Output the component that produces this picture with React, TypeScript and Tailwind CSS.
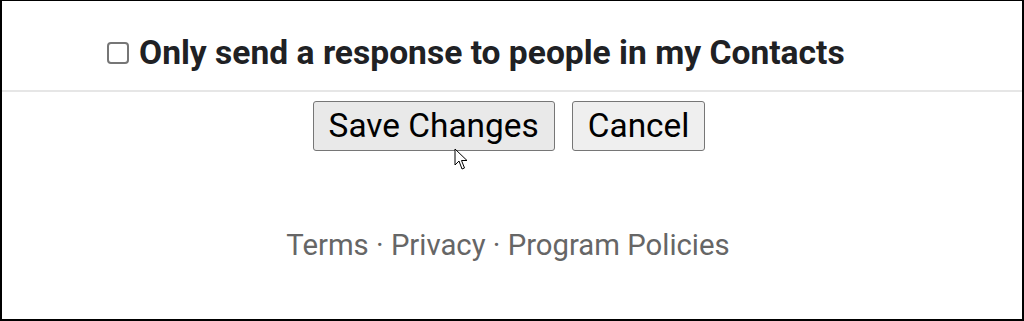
export default function App() {
  return (
    <div
      className="relative w-[1024px] h-[321px] bg-white border-t border-l-2 border-r-2 border-b-2 border-black overflow-hidden"
      style={{ fontFamily: 'Roboto, "Liberation Sans", sans-serif' }}
    >
      <div className="h-[89px] flex items-center pt-[14px] pl-[105px]">
        <label className="flex items-center gap-[10px]">
          <span className="w-[22px] h-[22px] border-2 border-[#767676] rounded-[4px] bg-white box-border" />
          <span className="text-[33.6px] font-bold text-[#202124] leading-none">
            Only send a response to people in my Contacts
          </span>
        </label>
      </div>
      <div className="h-[2px] bg-[#e6e6e6]" />
      <div className="flex justify-center gap-[17px] mt-[9px] pr-[6px]">
        <button className="h-[50px] px-[15px] bg-[#e9e9e9] border border-[#767676] rounded-[3px] text-[33.4px] text-black leading-none">
          Save Changes
        </button>
        <button className="h-[50px] px-[15px] bg-[#efefef] border border-[#767676] rounded-[3px] text-[33.4px] text-black leading-none">
          Cancel
        </button>
      </div>
      <div className="flex justify-center mt-[80px] pr-[8px] text-[29.3px] text-[#666666] leading-none">
        Terms · Privacy · Program Policies
      </div>
      <svg
        className="absolute left-[452px] top-[147px]"
        width="14"
        height="23"
        viewBox="0 0 14 23"
      >
        <path
          d="M1 1 L1 17 L5 13 L8 21 L10.5 20 L7.5 12.5 L13 12.5 Z"
          fill="white"
          stroke="black"
          strokeWidth="1"
          strokeLinejoin="miter"
        />
      </svg>
    </div>
  );
}
